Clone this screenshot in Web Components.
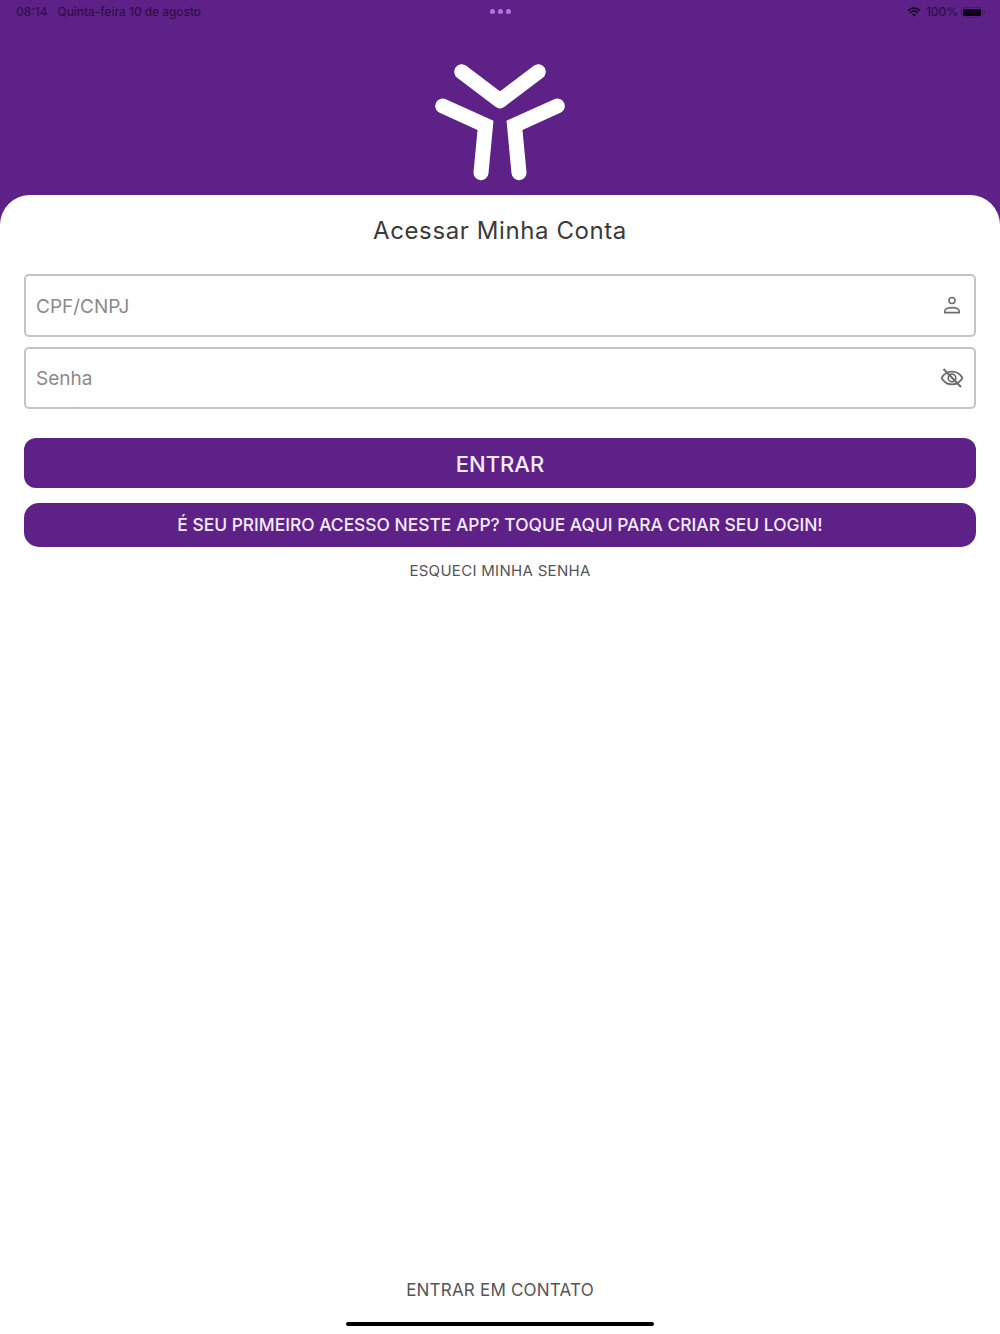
<!DOCTYPE html>
<html lang="pt-BR">
<head>
<meta charset="utf-8">
<title>Acessar Minha Conta</title>
<style>
  html, body { margin: 0; height: 100%; }
  body { font-family: Inter, "Noto Sans", sans-serif; background: #fff; }
</style>
</head>
<body>
<login-page>
  <status-bar slot="header"></status-bar>
  <brand-logo slot="header"></brand-logo>
  <h-title slot="title">Acessar Minha Conta</h-title>
  <text-field slot="form" label="CPF/CNPJ" icon="user"></text-field>
  <text-field slot="form" label="Senha" icon="eye-off"></text-field>
  <main-button slot="actions" size="large">ENTRAR</main-button>
  <main-button slot="actions" size="small">É SEU PRIMEIRO ACESSO NESTE APP? TOQUE AQUI PARA CRIAR SEU LOGIN!</main-button>
  <text-link slot="forgot">ESQUECI MINHA SENHA</text-link>
  <text-link slot="contact" size="large">ENTRAR EM CONTATO</text-link>
</login-page>

<script>
class LoginPage extends HTMLElement {
  constructor() {
    super();
    this.attachShadow({ mode: 'open' });
    this.shadowRoot.innerHTML = `
      <style>
        :host { display: flex; flex-direction: column; height: 1334px; background: #5e2187; overflow: hidden; }
        header { height: 195px; flex: none; }
        main { flex: 1; display: flex; flex-direction: column; background: #fff; border-radius: 30px 30px 0 0; padding: 0 24px; }
        .title { height: 79px; flex: none; }
        .form { display: flex; flex-direction: column; gap: 10px; }
        .actions { display: flex; flex-direction: column; gap: 15px; margin-top: 29px; }
        .forgot { margin-top: 15px; }
        .spacer { flex: 1; }
        .contact { margin-bottom: 22px; }
        .home { align-self: center; width: 308px; height: 4px; border-radius: 2px; background: #000; margin-bottom: 8px; }
      </style>
      <header><slot name="header"></slot></header>
      <main>
        <div class="title"><slot name="title"></slot></div>
        <div class="form"><slot name="form"></slot></div>
        <div class="actions"><slot name="actions"></slot></div>
        <div class="forgot"><slot name="forgot"></slot></div>
        <div class="spacer"></div>
        <div class="contact"><slot name="contact"></slot></div>
        <div class="home"></div>
      </main>`;
  }
}

class StatusBar extends HTMLElement {
  constructor() {
    super();
    this.attachShadow({ mode: 'open' });
    this.shadowRoot.innerHTML = `
      <style>
        :host { display: grid; grid-template-columns: 1fr auto 1fr; align-items: center; height: 24px; padding: 0 15px; font: 500 11.900px/24px Inter, sans-serif; color: #2e0f47; }
        .left { display: flex; gap: 10px; margin-left: 1px; white-space: nowrap; }
        .dots { display: flex; gap: 3px; margin-top: -1px; }
        .dots i { width: 5px; height: 5px; border-radius: 50%; background: #b873e6; }
        .right { display: flex; justify-content: flex-end; align-items: center; gap: 4px; white-space: nowrap; }
        svg { display: block; margin-right: 1px; }
        .battery { display: flex; align-items: center; gap: 1px; margin-left: -1px; }
        .cell { width: 22px; height: 11px; box-sizing: border-box; border: 1px solid #4a1a6c; border-radius: 3px; padding: 1px; }
        .cell b { display: block; height: 100%; background: #0c0414; border-radius: 1px; }
        .nub { width: 1px; height: 4px; background: #4a1a6c; }
      </style>
      <div class="left"><span>08:14</span><span>Quinta-feira 10 de agosto</span></div>
      <div class="dots"><i></i><i></i><i></i></div>
      <div class="right">
        <svg width="14" height="10" viewBox="0 0 14 10"><path d="M1 3.6a8.6 8.6 0 0 1 12 0M3 5.8a5.7 5.7 0 0 1 8 0" fill="none" stroke="#12061c" stroke-width="1.6"/><path d="M5 7.6a2.9 2.9 0 0 1 4 0L7 9.8z" fill="#12061c"/></svg>
        <span>100%</span>
        <div class="battery"><div class="cell"><b></b></div><div class="nub"></div></div>
      </div>`;
  }
}

class BrandLogo extends HTMLElement {
  constructor() {
    super();
    this.attachShadow({ mode: 'open' });
    this.shadowRoot.innerHTML = `
      <style>
        :host { display: flex; justify-content: center; padding-top: 36px; }
        svg { display: block; }
      </style>
      <svg width="140" height="130" viewBox="430 60 140 130" fill="none" stroke="#fff" stroke-width="15" stroke-linecap="round" stroke-linejoin="round">
        <path d="M461.7 71.7 500 100.700 538.300 71.700"/>
        <path stroke-linejoin="miter" d="M442.700 106 485.500 125.300 481 172.700"/>
        <path stroke-linejoin="miter" d="M557.300 106 514.500 125.300 519 172.700"/>
      </svg>`;
  }
}

class HTitle extends HTMLElement {
  constructor() {
    super();
    this.attachShadow({ mode: 'open' });
    this.shadowRoot.innerHTML = `
      <style>
        :host { display: block; text-align: center; font: 400 24px/72px Inter, sans-serif; letter-spacing: 0.6px; color: #3a3a3a; }
      </style>
      <slot></slot>`;
  }
}

const FIELD_ICONS = {
  user: `<svg width="24" height="24" viewBox="0 0 24 24" fill="none" stroke="#6b6b6b" stroke-width="1.6"><circle cx="12" cy="7.500" r="3"/><path d="M4.800 19.600v-1.400c0-2.200 3.400-3.600 7.200-3.600s7.200 1.400 7.200 3.600v1.400z"/></svg>`,
  'eye-off': `<svg width="24" height="24" viewBox="0 0 24 24" fill="none" stroke="#6b6b6b" stroke-width="1.700"><path d="M1.600 12C4 7.600 7.600 5.600 12 5.600s8 2 10.400 6.400c-2.400 4.400-6 6.400-10.400 6.400S4 16.400 1.600 12z"/><circle cx="12" cy="12" r="3.800"/><path d="M3.500 3 21 21" stroke-width="2"/></svg>`
};

class TextField extends HTMLElement {
  constructor() {
    super();
    this.attachShadow({ mode: 'open' });
    this.shadowRoot.innerHTML = `
      <style>
        :host { display: flex; align-items: center; justify-content: space-between; box-sizing: border-box; height: 62.500px; padding: 0 10px; border: 2px solid #c4c4c4; border-radius: 5px; }
        span { padding-top: 2px; font: 400 19px/1 Inter, sans-serif; color: #8a8a8a; }
        svg { display: block; }
      </style>
      <span></span><div class="icon"></div>`;
  }

  connectedCallback() {
    this.shadowRoot.querySelector('span').textContent = this.getAttribute('label');
    this.shadowRoot.querySelector('.icon').innerHTML = FIELD_ICONS[this.getAttribute('icon')];
  }
}

class MainButton extends HTMLElement {
  constructor() {
    super();
    this.attachShadow({ mode: 'open' });
    this.shadowRoot.innerHTML = `
      <style>
        :host { display: flex; align-items: center; justify-content: center; box-sizing: border-box; background: #5e2187; color: #f4ecf8; font-family: Inter, sans-serif; font-weight: 500; white-space: nowrap; }
        :host([size="large"]) { height: 50px; padding-top: 2px; border-radius: 12px; font-size: 22px; }
        :host([size="small"]) { height: 44px; padding-bottom: 2px; border-radius: 15px; font-size: 17.400px; }
      </style>
      <slot></slot>`;
  }
}

class TextLink extends HTMLElement {
  constructor() {
    super();
    this.attachShadow({ mode: 'open' });
    this.shadowRoot.innerHTML = `
      <style>
        :host { display: block; text-align: center; font: 400 15px/18px Inter, sans-serif; letter-spacing: 0.3px; color: #555; }
        :host([size="large"]) { font-size: 17px; line-height: 20px; letter-spacing: 0.2px; }
      </style>
      <slot></slot>`;
  }
}

customElements.define('login-page', LoginPage);
customElements.define('status-bar', StatusBar);
customElements.define('brand-logo', BrandLogo);
customElements.define('h-title', HTitle);
customElements.define('text-field', TextField);
customElements.define('main-button', MainButton);
customElements.define('text-link', TextLink);
</script>
</body>
</html>
